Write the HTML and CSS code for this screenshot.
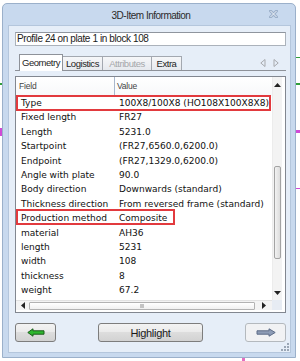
FILE: index.html
```html
<!DOCTYPE html>
<html lang="en">
<head>
    <meta charset="UTF-8">
    <meta name="viewport" content="width=device-width, initial-scale=1.0">
    <title>3D-Item Information</title>
    <link rel="stylesheet" href="styles.css">
</head>
<body>
    <!-- bits of the drawing behind the dialog -->
    <span class="cad cad-g1"></span>
    <span class="cad cad-g2"></span>
    <span class="cad cad-g3"></span>
    <span class="cad cad-m1"></span>
    <span class="cad cad-m2"></span>
    <span class="cad cad-m3"></span>
    <span class="cad cad-p1"></span>

    <div class="window">
        <div class="titlebar">
            <span class="title">3D-Item Information</span>
            <svg class="close" width="9" height="8" viewBox="0 0 9 8">
                <path d="M1.5 1 L7.5 7 M7.5 1 L1.5 7" stroke="#9cb0ca" stroke-width="3" stroke-linecap="square"/>
                <path d="M1.5 1 L7.5 7 M7.5 1 L1.5 7" stroke="#eef3f9" stroke-width="1"/>
            </svg>
        </div>

        <div class="client">
            <div class="namebox">Profile 24 on plate 1 in block 108</div>

            <div class="tabstrip">
                <span class="tab tab-geo active">Geometry</span>
                <span class="tab tab-log">Logistics</span>
                <span class="tab tab-att disabled">Attributes</span>
                <span class="tab tab-ext">Extra</span>
                <span class="tab-arrows">
                    <svg width="6" height="8" viewBox="0 0 6 8"><path d="M5 0.5 L0.8 4 L5 7.5 Z" fill="none" stroke="#a7a9ad"/></svg>
                    <svg width="6" height="8" viewBox="0 0 6 8"><path d="M1 0.5 L5.2 4 L1 7.5 Z" fill="none" stroke="#a7a9ad"/></svg>
                </span>
            </div>

            <div class="list">
                <div class="list-main">
                    <div class="list-head">
                        <span class="col-field">Field</span>
                        <span class="col-value">Value</span>
                    </div>
                    <div class="row"><span class="col-field">Type</span><span class="col-value">100X8/100X8 (HO108X100X8X8)</span></div>
                    <div class="row"><span class="col-field">Fixed length</span><span class="col-value">FR27</span></div>
                    <div class="row"><span class="col-field">Length</span><span class="col-value">5231.0</span></div>
                    <div class="row"><span class="col-field">Startpoint</span><span class="col-value">(FR27,6560.0,6200.0)</span></div>
                    <div class="row"><span class="col-field">Endpoint</span><span class="col-value">(FR27,1329.0,6200.0)</span></div>
                    <div class="row"><span class="col-field">Angle with plate</span><span class="col-value">90.0</span></div>
                    <div class="row"><span class="col-field">Body direction</span><span class="col-value">Downwards (standard)</span></div>
                    <div class="row"><span class="col-field">Thickness direction</span><span class="col-value">From reversed frame (standard)</span></div>
                    <div class="row"><span class="col-field">Production method</span><span class="col-value">Composite</span></div>
                    <div class="row"><span class="col-field">material</span><span class="col-value">AH36</span></div>
                    <div class="row"><span class="col-field">length</span><span class="col-value">5231</span></div>
                    <div class="row"><span class="col-field">width</span><span class="col-value">108</span></div>
                    <div class="row"><span class="col-field">thickness</span><span class="col-value">8</span></div>
                    <div class="row"><span class="col-field">weight</span><span class="col-value">67.2</span></div>
                </div>

                <div class="vscroll">
                    <svg class="sb-arrow" width="7" height="4" viewBox="0 0 7 4"><path d="M0 4 L3.5 0 L7 4 Z" fill="#222"/></svg>
                    <div class="vtrack"><div class="vthumb"></div></div>
                    <svg class="sb-arrow" width="7" height="4" viewBox="0 0 7 4"><path d="M0 0 L3.5 4 L7 0 Z" fill="#222"/></svg>
                </div>

                <div class="hscroll">
                    <svg class="sb-arrow" width="4" height="7" viewBox="0 0 4 7"><path d="M4 0 L0 3.5 L4 7 Z" fill="#222"/></svg>
                    <div class="hthumb"><span class="grip-dot"></span></div>
                    <svg class="sb-arrow" width="4" height="7" viewBox="0 0 4 7"><path d="M0 0 L4 3.5 L0 7 Z" fill="#222"/></svg>
                </div>
                <div class="corner"></div>

                <div class="mark mark-type"></div>
                <div class="mark mark-prod"></div>
            </div>

            <div class="buttons">
                <button class="btn btn-arrow" type="button">
                    <svg width="18" height="9" viewBox="0 0 18 9"><path d="M0.8 4.5 L6 0.8 L6 2.8 L17 2.8 L17 6.2 L6 6.2 L6 8.2 Z" fill="#2eb82e" stroke="#1d5c1d" stroke-width="1"/></svg>
                </button>
                <button class="btn btn-main" type="button">Highlight</button>
                <button class="btn btn-arrow disabled" type="button">
                    <svg width="20" height="9" viewBox="0 0 20 9"><path d="M19.2 4.5 L13 0.8 L13 2.8 L1 2.8 L1 6.2 L13 6.2 L13 8.2 Z" fill="#8d9cb6" stroke="#5e6d88" stroke-width="1"/></svg>
                </button>
            </div>

            <svg class="resize-grip" width="8" height="8" viewBox="0 0 8 8">
                <rect x="6" y="0" width="2" height="2" fill="#9aa6b5"/>
                <rect x="3" y="3" width="2" height="2" fill="#9aa6b5"/>
                <rect x="6" y="3" width="2" height="2" fill="#9aa6b5"/>
                <rect x="0" y="6" width="2" height="2" fill="#9aa6b5"/>
                <rect x="3" y="6" width="2" height="2" fill="#9aa6b5"/>
                <rect x="6" y="6" width="2" height="2" fill="#9aa6b5"/>
            </svg>
        </div>
    </div>
</body>
</html>
```

FILE: styles.css
```css
body {
    margin: 0;
    width: 300px;
    height: 361px;
    overflow: hidden;
    position: relative;
    background: #ffffff;
    font-family: "Liberation Sans", Arial, sans-serif;
    color: #1a1a1a;
}

/* drawing lines peeking out around the dialog */
.cad {
    position: absolute;
    display: block;
}
.cad-g1 { left: 296px; top: 57px; width: 4px; height: 1px; background: #2f9e3a; }
.cad-g2 { left: 296px; top: 83px; width: 4px; height: 2px; background: #2f9e3a; }
.cad-g3 { left: 0; top: 83px; width: 2px; height: 2px; background: #2f9e3a; }
.cad-m1 { left: 0; top: 128px; width: 2px; height: 8px; background: #d04ad6; }
.cad-m2 { left: 296px; top: 130px; width: 4px; height: 3px; background: #d04ad6; }
.cad-m3 { left: 296px; top: 188px; width: 4px; height: 1px; background: #d04ad6; }
.cad-p1 { left: 242px; top: 358px; width: 3px; height: 3px; background: #e46fc0; }

.window {
    margin: 3px 0 0 2px;
    width: 294px;
    height: 355px;
    box-sizing: border-box;
    border: 1px solid #9bb0ca;
    border-radius: 5px 5px 0 0;
    background: #c8d9ee;
    display: flex;
    flex-direction: column;
}

.titlebar {
    height: 21px;
    display: flex;
    align-items: center;
    justify-content: center;
    position: relative;
    flex-shrink: 0;
}
.title {
    font-size: 10px;
    letter-spacing: -0.5px;
    color: #2b2b2b;
    margin-left: 4px;
    margin-top: 1px;
}
.close {
    position: absolute;
    right: 17px;
    top: 6px;
}

.client {
    flex: 1;
    margin: 0 4px 4px 5px;
    background: #e6eef8;
    border: 1px solid #b4c6dc;
    position: relative;
    padding: 6px 4px 0 6px;
    display: flex;
    flex-direction: column;
}

.namebox {
    height: 14px;
    box-sizing: border-box;
    border: 1px solid #abb2bb;
    border-top-color: #8f959e;
    background: #ffffff;
    font-size: 10px;
    letter-spacing: -0.4px;
    line-height: 12px;
    padding-left: 1px;
    white-space: nowrap;
}

.tabstrip {
    margin-top: 8px;
    height: 16px;
    display: flex;
    align-items: flex-end;
    padding-left: 4px;
    border-bottom: 1px solid #8e9299;
    position: relative;
}
.tab {
    height: 14px;
    box-sizing: border-box;
    border: 1px solid #a3a8b0;
    border-bottom: none;
    border-left: none;
    background: linear-gradient(#f6f7f9, #e6e9ee);
    font-size: 9.5px;
    letter-spacing: -0.45px;
    line-height: 13px;
    text-align: center;
    color: #1e1e1e;
}
.tab-geo { width: 44px; }
.tab-log { width: 40px; }
.tab-att { width: 49px; }
.tab-ext { width: 30px; }
.tab:first-child {
    border-left: 1px solid #8e9299;
}
.tab.active {
    height: 17px;
    margin-bottom: -1px;
    background: #ffffff;
    border-color: #8e9299;
    line-height: 16px;
}
.tab.disabled {
    color: #a5a7aa;
}
.tab-arrows {
    margin-left: auto;
    display: flex;
    gap: 7px;
    align-self: center;
    margin-right: 7px;
    margin-top: 1px;
}
.tab-arrows svg {
    display: block;
}

.list {
    margin-top: 5px;
    height: 237px;
    box-sizing: border-box;
    border: 1px solid #828790;
    background: #ffffff;
    display: grid;
    grid-template-columns: 256px 11px;
    grid-template-rows: 223px 10px;
    position: relative;
    font-family: "DejaVu Sans", Verdana, sans-serif;
    font-size: 9.05px;
}

.list-main {
    overflow: hidden;
}
.list-head {
    height: 19px;
    display: flex;
    align-items: stretch;
    font-family: "Liberation Sans", Arial, sans-serif;
    font-size: 8.5px;
    letter-spacing: -0.2px;
    color: #444;
    background: linear-gradient(#ffffff, #f7f8fa);
}
.list-head .col-field {
    width: 99px;
    border-right: 1px solid #a9b8cd;
    padding-left: 3px;
    box-sizing: border-box;
    line-height: 19px;
}
.list-head .col-value {
    padding-left: 2px;
    line-height: 19px;
}

.row {
    height: 14.4px;
    line-height: 14.4px;
    display: flex;
    white-space: nowrap;
    color: #111;
}
.row .col-field {
    width: 100px;
    padding-left: 5px;
    box-sizing: border-box;
    flex-shrink: 0;
}
.row .col-value {
    padding-left: 3px;
}

.vscroll {
    grid-column: 2;
    grid-row: 1;
    width: 10px;
    background: #f3f3f3;
    border-left: 1px solid #ececec;
    display: flex;
    flex-direction: column;
    align-items: center;
    padding: 6px 0 5px;
    box-sizing: border-box;
}
.vtrack {
    flex: 1;
    width: 100%;
    padding-top: 79px;
    padding-bottom: 34px;
    box-sizing: border-box;
}
.vthumb {
    height: 100%;
    margin: 0 1px;
    border: 1px solid #a3a3a3;
    border-radius: 2px;
    background: linear-gradient(90deg, #f2f2f2, #dcdcdc);
}
.sb-arrow {
    display: block;
    flex-shrink: 0;
}

.hscroll {
    grid-column: 1;
    grid-row: 2;
    background: #f3f3f3;
    border-top: 1px solid #e2e2e2;
    display: flex;
    align-items: center;
    padding: 0 6px 0 5px;
    gap: 4px;
    box-sizing: border-box;
}
.hthumb {
    flex: 1;
    height: 8px;
    box-sizing: border-box;
    border: 1px solid #b2b2b2;
    border-radius: 1px;
    background: linear-gradient(#ffffff, #f0f0f0);
    display: flex;
    align-items: center;
    justify-content: center;
    margin-right: 3px;
}
.grip-dot {
    width: 4px;
    height: 4px;
    background: #c4c4c4;
}
.corner {
    grid-column: 2;
    grid-row: 2;
    width: 10px;
    background: #e7ecf3;
}

.mark {
    position: absolute;
    left: 0;
    box-sizing: border-box;
    height: 16px;
    border: 2px solid #e23a3e;
}
.mark-type {
    top: 18px;
    width: 255px;
}
.mark-prod {
    top: 132px;
    width: 159px;
}

.buttons {
    margin-top: 10px;
    display: flex;
    justify-content: space-between;
}
.btn {
    height: 19px;
    box-sizing: border-box;
    border: 1px solid #7d7d7d;
    border-radius: 3px;
    background: linear-gradient(#f3f3f3 0%, #ebebeb 45%, #dddddd 50%, #d2d2d2 100%);
    font-family: "Liberation Sans", Arial, sans-serif;
    font-size: 11px;
    letter-spacing: -0.3px;
    color: #1a1a1a;
    padding: 0;
    display: flex;
    align-items: center;
    justify-content: center;
}
.btn-arrow {
    width: 41px;
}
.btn-main {
    width: 105px;
}
.btn.disabled {
    border-color: #b4b9be;
    background: #f1f2f4;
}
.btn svg {
    display: block;
}

.resize-grip {
    position: absolute;
    right: 1px;
    bottom: 1px;
}
```
